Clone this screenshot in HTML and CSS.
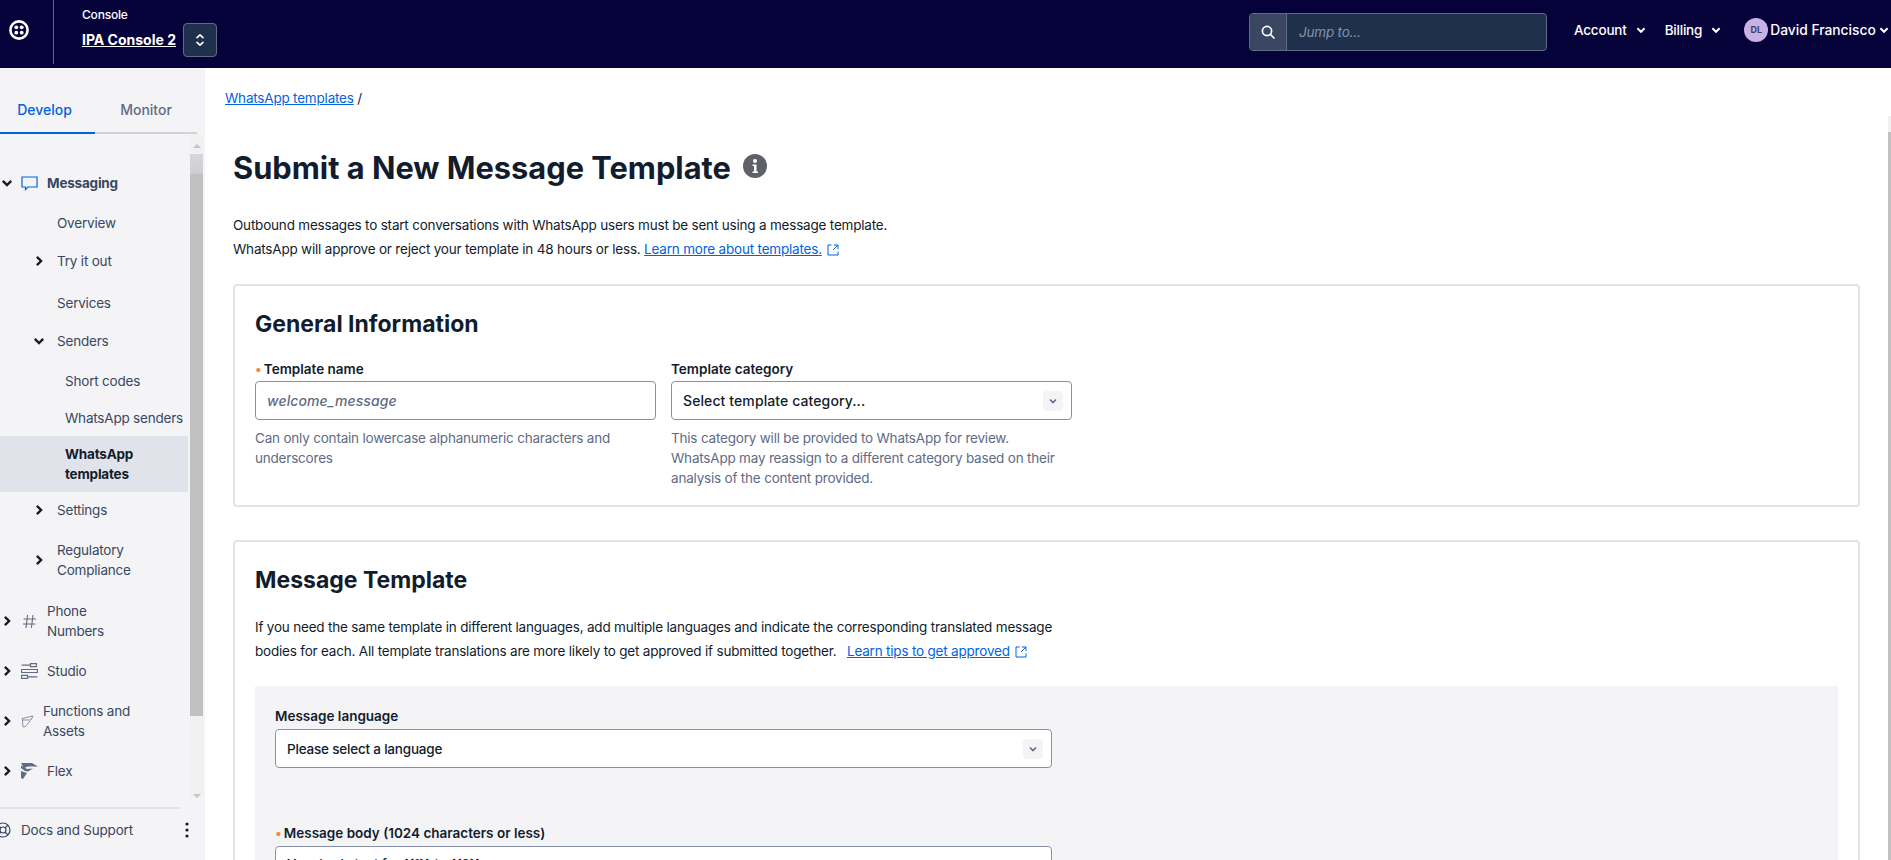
FILE: index.html
```html
<!DOCTYPE html>
<html>

<head>
    <meta charset="UTF-8">
    <title>Submit a New Message Template</title>
    <link rel="stylesheet" href="styles.css">
</head>

<body>
    <header class="topbar">
        <div class="logo-cell">
            <svg width="20" height="20" viewBox="0 0 20 20">
                <circle cx="10" cy="10" r="8.6" fill="none" stroke="#fff" stroke-width="2.6" />
                <circle cx="7.3" cy="7.3" r="1.9" fill="#fff" />
                <circle cx="12.7" cy="7.3" r="1.9" fill="#fff" />
                <circle cx="7.3" cy="12.7" r="1.9" fill="#fff" />
                <circle cx="12.7" cy="12.7" r="1.9" fill="#fff" />
            </svg>
        </div>
        <div class="account-switch">
            <div class="console-label">Console</div>
            <a class="console-name">IPA Console 2</a>
        </div>
        <div class="switch-btn">
            <svg width="10" height="14" viewBox="0 0 10 14" fill="none" stroke="#fff" stroke-width="1.6" stroke-linecap="round" stroke-linejoin="round">
                <path d="M2 4.6 5 1.8l3 2.8M2 9.4l3 2.8 3-2.8" />
            </svg>
        </div>
        <div class="search">
            <div class="search-icon">
                <svg width="14" height="14" viewBox="0 0 14 14" fill="none" stroke="#fff" stroke-width="1.7" stroke-linecap="round">
                    <circle cx="6" cy="6" r="4.6" />
                    <path d="M9.5 9.5 13 13" />
                </svg>
            </div>
            <div class="search-text">Jump to...</div>
        </div>
        <a class="top-link link-account">Account<svg class="top-chev" viewBox="0 0 10 10"><path d="M2 3.5 5 6.5l3-3" /></svg></a>
        <a class="top-link link-billing">Billing<svg class="top-chev" viewBox="0 0 10 10"><path d="M2 3.5 5 6.5l3-3" /></svg></a>
        <div class="avatar">DL</div>
        <a class="top-link link-user">David Francisco<svg class="top-chev" viewBox="0 0 10 10"><path d="M2 3.5 5 6.5l3-3" /></svg></a>
    </header>

    <div class="layout">
        <aside class="sidebar">
            <div class="tabs">
                <div class="tab tab-active">Develop</div>
                <div class="tab">Monitor</div>
            </div>
            <div class="nav-wrap">
                <nav class="nav">
                    <div class="row top h42 strong">
                        <svg class="chev" viewBox="0 0 10 10"><path d="M2 3.5 5 6.5l3-3" /></svg>
                        <svg class="icon" width="17" height="15" viewBox="0 0 17 15" fill="none" stroke="#0263e0" stroke-width="1.2"><path d="M1 1h15v10H7l-2.5 2.6V11H1z" /></svg>
                        <span>Messaging</span>
                    </div>
                    <div class="row sub plain">Overview</div>
                    <div class="row sub">
                        <svg class="chev" viewBox="0 0 10 10"><path d="M3.5 2 6.5 5l-3 3" /></svg>
                        <span class="sub-label">Try it out</span>
                    </div>
                    <div class="row sub plain mt4">Services</div>
                    <div class="row sub">
                        <svg class="chev" viewBox="0 0 10 10"><path d="M2 3.5 5 6.5l3-3" /></svg>
                        <span class="sub-label">Senders</span>
                    </div>
                    <div class="row leaf mt2">Short codes</div>
                    <div class="row leaf h36">WhatsApp senders</div>
                    <div class="row leaf current">WhatsApp<br>templates</div>
                    <div class="row sub h36">
                        <svg class="chev" viewBox="0 0 10 10"><path d="M3.5 2 6.5 5l-3 3" /></svg>
                        <span class="sub-label">Settings</span>
                    </div>
                    <div class="row sub h60 mt2">
                        <svg class="chev" viewBox="0 0 10 10"><path d="M3.5 2 6.5 5l-3 3" /></svg>
                        <span class="sub-label">Regulatory<br>Compliance</span>
                    </div>
                    <div class="row top h60 mt1">
                        <svg class="chev" viewBox="0 0 10 10"><path d="M3.5 2 6.5 5l-3 3" /></svg>
                        <svg class="icon" width="17" height="15" viewBox="0 0 17 15" fill="none" stroke="#606b85" stroke-width="1.1"><path d="M6.6 1 5 14M12 1l-1.6 13M2.6 5h12.4M2 10h12.4" /></svg>
                        <span>Phone<br>Numbers</span>
                    </div>
                    <div class="row top h40">
                        <svg class="chev" viewBox="0 0 10 10"><path d="M3.5 2 6.5 5l-3 3" /></svg>
                        <svg class="icon" width="17" height="16" viewBox="0 0 17 16" fill="none" stroke="#606b85" stroke-width="1.1"><path d="M9.500 .6h6v3h-6zM.6 6.500h15.800v3H.6zM.6 12.400h6v3h-6zM.6 2.100h8.900M6.600 13.900h9.800" /></svg>
                        <span>Studio</span>
                    </div>
                    <div class="row top h60">
                        <svg class="chev" viewBox="0 0 10 10"><path d="M3.5 2 6.500 5l-3 3" /></svg>
                        <svg class="icon" width="13" height="13" viewBox="0 0 13 13" fill="none" stroke="#8891aa" stroke-width="1"><path d="M1 3.500 12 1 10 5H1.500zM1.500 5 2 12l2.500-.5L9 6" /></svg>
                        <span>Functions and<br>Assets</span>
                    </div>
                    <div class="row top h40">
                        <svg class="chev" viewBox="0 0 10 10"><path d="M3.5 2 6.500 5l-3 3" /></svg>
                        <svg class="icon" width="17" height="16" viewBox="0 0 17 16" fill="#606b85"><path d="M0 0h11l6 3.500H7L3 5zM0 2.500l6 3.500 6-.5-5 3-3-.5-4-3zM0 8l6 2-4 6-2-1z" /></svg>
                        <span>Flex</span>
                    </div>
                </nav>
                <div class="nav-scroll">
                    <div class="arrow-up"></div>
                    <div class="nav-thumb"></div>
                    <div class="arrow-down"></div>
                </div>
            </div>
            <div class="docs">
                <svg class="docs-icon" width="16" height="16" viewBox="0 0 16 16" fill="none" stroke="#394762" stroke-width="1.2"><circle cx="8" cy="8" r="7" /><circle cx="8" cy="8" r="3" /><path d="M3 3l3 3M13 3l-3 3M3 13l3-3M13 13l-3-3" /></svg>
                <span class="docs-text">Docs and Support</span>
                <svg class="kebab" width="4" height="16" viewBox="0 0 4 16" fill="#121c2d"><circle cx="2" cy="2" r="1.600" /><circle cx="2" cy="8" r="1.600" /><circle cx="2" cy="14" r="1.600" /></svg>
            </div>
        </aside>

        <main class="main">
            <div class="content">
                <div class="breadcrumb"><a class="link">WhatsApp templates</a> /</div>
                <div class="page-head">
                    <h1>Submit a New Message Template</h1>
                    <svg class="info" width="24" height="24" viewBox="0 0 24 24"><circle cx="12" cy="12" r="12" fill="#5f6068" /><circle cx="12" cy="7" r="2" fill="#fff" /><path d="M9.500 10.500h4v7h1.500v1.500H9.500v-1.500H11v-5.500H9.500z" fill="#fff" /></svg>
                </div>
                <p class="intro">Outbound messages to start conversations with WhatsApp users must be sent using a message template.<br>WhatsApp will approve or reject your template in 48 hours or less. <a class="link">Learn more about templates.</a> <svg class="ext" width="12" height="12" viewBox="0 0 12 12" fill="none" stroke="#0263e0" stroke-width="1"><path d="M4.500 1H1v10h10V7.500M7 1h4v4M11 1 6 6" /></svg></p>

                <section class="card card-general">
                    <h2>General Information</h2>
                    <div class="field-row">
                        <div class="field">
                            <label class="required">Template name</label>
                            <div class="input placeholder">welcome_message</div>
                            <p class="help">Can only contain lowercase alphanumeric characters and underscores</p>
                        </div>
                        <div class="field">
                            <label>Template category</label>
                            <div class="input select wide-text">
                                <span>Select template category...</span>
                                <div class="select-chev"><svg viewBox="0 0 10 10"><path d="M2 3.500 5 6.500l3-3" /></svg></div>
                            </div>
                            <p class="help">This category will be provided to WhatsApp for review. WhatsApp may reassign to a different category based on their analysis of the content provided.</p>
                        </div>
                    </div>
                </section>

                <section class="card card-message">
                    <h2>Message Template</h2>
                    <p class="card-text">If you need the same template in different languages, add multiple languages and indicate the corresponding translated message bodies for each. All template translations are more likely to get approved if submitted together. <a class="link tip-link">Learn tips to get approved</a> <svg class="ext" width="12" height="12" viewBox="0 0 12 12" fill="none" stroke="#0263e0" stroke-width="1"><path d="M4.500 1H1v10h10V7.500M7 1h4v4M11 1 6 6" /></svg></p>
                    <div class="lang-block">
                        <div class="lang-field">
                            <label>Message language</label>
                            <div class="input select">
                                <span>Please select a language</span>
                                <div class="select-chev"><svg viewBox="0 0 10 10"><path d="M2 3.500 5 6.500l3-3" /></svg></div>
                            </div>
                        </div>
                        <div class="lang-field body-field">
                            <label class="required">Message body (1024 characters or less)</label>
                            <div class="input textarea">Your body text for {{1}} to {{2}}</div>
                        </div>
                    </div>
                </section>
            </div>
            <div class="page-scroll"></div>
        </main>
    </div>
</body>

</html>
```
FILE: styles.css
```css
*{
    box-sizing: border-box;
    font-family: 'Inter', 'Liberation Sans', sans-serif;
}
html, body{
    margin: 0;
    height: 860px;
    overflow: hidden;
    background: #fff;
    color: #121c2d;
    font-size: 13.5px;
    letter-spacing: -0.2px;
    line-height: 20px;
}
p, h1, h2{
    margin: 0;
}

/* top bar */
.topbar{
    height: 68px;
    display: flex;
    align-items: flex-start;
    background: #06033a;
    color: #fff;
}
.topbar > *{
    flex-shrink: 0;
}
.logo-cell{
    width: 54px;
    height: 64px;
    padding: 20px 0 0 9px;
    border-right: 1px solid #606b85;
}
.account-switch{
    width: 101px;
    margin-left: 28px;
    padding-top: 5px;
}
.console-label{
    font-size: 12px;
    font-weight: 500;
    line-height: 20px;
}
.console-name{
    display: block;
    margin-top: 5px;
    font-size: 14px;
    font-weight: 700;
    letter-spacing: 0;
    white-space: nowrap;
    text-decoration: underline;
}
.switch-btn{
    width: 34px;
    height: 34px;
    margin: 23px 0 0 0;
    display: flex;
    align-items: center;
    justify-content: center;
    background: #1f304c;
    border: 1px solid #606b85;
    border-radius: 4px;
}
.search{
    width: 298px;
    height: 38px;
    margin: 13px 0 0 1032px;
    display: flex;
    background: #1f304c;
    border: 1px solid #606b85;
    border-radius: 4px;
}
.search-icon{
    width: 37px;
    display: flex;
    align-items: center;
    justify-content: center;
    background: #394762;
    border-right: 1px solid #606b85;
    border-radius: 3px 0 0 3px;
}
.search-text{
    padding-left: 12px;
    line-height: 36px;
    color: #8891aa;
    font-style: italic;
}
.top-link{
    display: flex;
    align-items: center;
    height: 24px;
    margin-top: 18px;
    font-weight: 500;
    white-space: pre;
}
.link-account{
    margin-left: 27px;
}
.link-billing{
    margin-left: 18px;
}
.link-user{
    margin-left: 2px;
    font-size: 13.8px;
    letter-spacing: 0;
}
.link-user .top-chev{
    margin-left: 2px;
}
.top-chev{
    width: 12px;
    height: 12px;
    margin-left: 8px;
    fill: none;
    stroke: #fff;
    stroke-width: 1.6;
}
.avatar{
    width: 24px;
    height: 24px;
    margin: 18px 0 0 22px;
    border-radius: 50%;
    background: #c9b1e8;
    color: #394762;
    font-size: 9px;
    font-weight: 700;
    line-height: 24px;
    text-align: center;
}

/* page frame */
.layout{
    display: flex;
    height: 792px;
}
.sidebar{
    width: 205px;
    flex-shrink: 0;
    background: #f4f4f6;
    overflow: hidden;
}
.main{
    flex: 1;
    display: flex;
}

/* sidebar */
.tabs{
    width: 197px;
    height: 66px;
    display: flex;
    border-bottom: 2px solid #d0d3dc;
}
.tab{
    width: 95px;
    height: 66px;
    padding-top: 32px;
    color: #606b85;
    font-size: 14px;
    font-weight: 500;
    letter-spacing: 0;
    text-align: center;
}
.tab + .tab{
    width: 102px;
}
.tab-active{
    padding-right: 6px;
    color: #0263e0;
    border-bottom: 2px solid #0263e0;
}
.nav-wrap{
    height: 664px;
    display: flex;
}
.nav{
    width: 190px;
    flex-shrink: 0;
    padding-top: 28px;
    color: #394762;
    overflow: hidden;
}
.row{
    display: flex;
    align-items: center;
    height: 38px;
}
.top{
    height: 40px;
}
.sub{
    padding-left: 32px;
}
.sub.plain{
    padding-left: 57px;
}
.leaf{
    padding-left: 65px;
    white-space: nowrap;
}
.chev{
    width: 14px;
    height: 14px;
    flex-shrink: 0;
    fill: none;
    stroke: #121c2d;
    stroke-width: 1.700;
}
.icon{
    flex-shrink: 0;
    margin: 0 9px 0 7px;
}
.sub-label{
    margin-left: 11px;
}
.strong{
    font-weight: 700;
}
.current{
    height: 56px;
    width: 188px;
    background: #e1e3ea;
    color: #121c2d;
    font-weight: 700;
}
.h36{
    height: 36px;
}
.h40{
    height: 40px;
}
.h42{
    height: 42px;
}
.h60{
    height: 60px;
}
.mt1{
    margin-top: 1px;
}
.mt2{
    margin-top: 2px;
}
.mt4{
    margin-top: 4px;
}
.nav-scroll{
    width: 13px;
    display: flex;
    flex-direction: column;
    align-items: center;
    background: #f1f1f1;
}
.arrow-up, .arrow-down{
    width: 0;
    height: 0;
    margin: 10px 0 6px;
    border-left: 4px solid transparent;
    border-right: 4px solid transparent;
    border-bottom: 4px solid #c4c6cf;
}
.arrow-down{
    margin: 78px 0 0;
    border-bottom: 0;
    border-top: 4px solid #c4c6cf;
}
.nav-thumb{
    width: 13px;
    height: 572px;
    background: linear-gradient(#d6d6de, #cdcdd2 20px, #c1c1c1 20px);
}
.docs{
    width: 180px;
    height: 60px;
    margin-top: 9px;
    display: flex;
    align-items: flex-start;
    padding-top: 11px;
    border-top: 2px solid #e1e3ea;
    color: #394762;
    position: relative;
}
.docs-icon{
    margin: 2px 0 0 -5px;
}
.docs-text{
    margin-left: 10px;
}
.kebab{
    position: absolute;
    left: 185px;
    top: 13px;
}

/* content */
.content{
    flex: 1;
    padding: 20px 28px 0 20px;
}
.page-scroll{
    width: 3px;
    height: 744px;
    margin-top: 48px;
    border-top: 16px solid #f1f1f1;
    background: #c1c1c1;
}
.link{
    color: #0263e0;
    text-decoration: underline;
}
.tip-link{
    margin-left: 7px;
}
.page-head{
    display: flex;
    align-items: center;
    gap: 12px;
    height: 40px;
    margin: 40px 0 0 8px;
}
h1{
    font-size: 30.800px;
    font-weight: 700;
    letter-spacing: 0;
    line-height: 40px;
}
.info{
    margin-bottom: 4px;
}
.intro{
    margin: 25px 0 0 8px;
    line-height: 24px;
}
.ext{
    margin-left: 2px;
    vertical-align: -2px;
}
.card{
    height: 223px;
    margin: 23px 0 0 8px;
    padding: 22px 20px 18px;
    border: 2px solid #e1e3ea;
    border-radius: 4px;
}
h2{
    font-size: 23px;
    font-weight: 700;
    letter-spacing: 0;
    line-height: 32px;
}
.field-row{
    display: flex;
    gap: 15px;
    margin-top: 19px;
}
.field{
    width: 401px;
}
label{
    display: block;
    font-weight: 600;
    letter-spacing: 0;
}
.required::before{
    content: "\2022";
    margin-right: 2px;
    color: #f2893d;
}
.input{
    height: 39px;
    margin-top: 2px;
    padding: 0 11px;
    display: flex;
    align-items: center;
    background: #fff;
    border: 1px solid #8891aa;
    border-radius: 4px;
    font-weight: 500;
}
.placeholder{
    color: #606b85;
    font-size: 14px;
    font-style: italic;
    letter-spacing: 0.1px;
}
.wide-text{
    font-size: 14px;
    letter-spacing: 0.1px;
}
.select{
    justify-content: space-between;
    padding-right: 8px;
}
.select-chev{
    width: 20px;
    height: 20px;
    display: flex;
    align-items: center;
    justify-content: center;
    background: #f4f4f6;
    border-radius: 4px;
}
.select-chev svg{
    width: 10px;
    height: 10px;
    fill: none;
    stroke: #606b85;
    stroke-width: 1.600;
}
.help{
    margin-top: 8px;
    color: #606b85;
}

.card-message{
    height: 330px;
    margin-top: 33px;
    overflow: hidden;
}
.card-text{
    width: 830px;
    margin-top: 19px;
    line-height: 24px;
}
.lang-block{
    margin-top: 23px;
    height: 200px;
    padding: 20px 20px 0;
    background: #f4f4f6;
}
.lang-field{
    width: 777px;
}
.lang-field .input{
    margin-top: 3px;
}
.body-field{
    margin-top: 55px;
}
.body-field .textarea{
    height: 60px;
    margin-top: 3px;
    align-items: flex-start;
    padding-top: 7px;
}
```
